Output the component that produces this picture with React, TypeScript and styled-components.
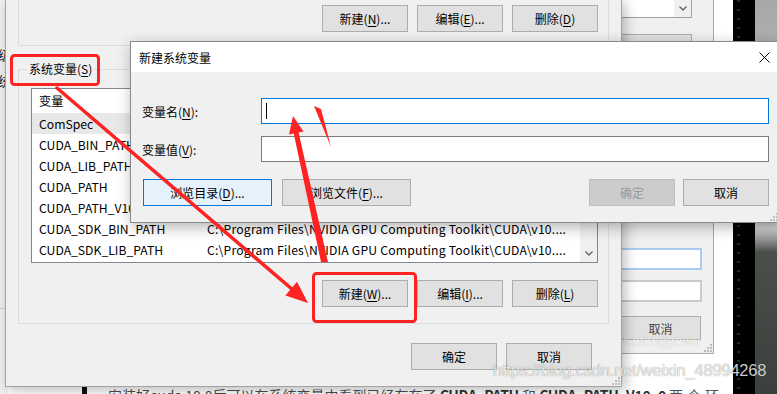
import React from 'react';
import styled, { createGlobalStyle } from 'styled-components';

const GlobalStyle = createGlobalStyle`
  html, body {
    margin: 0;
    padding: 0;
    background: #fff;
  }

  * {
    box-sizing: border-box;
  }
`;

const ui = `"Noto Sans CJK SC", "Liberation Sans", sans-serif`;

// ---------- desktop / page underneath ----------

const Desktop = styled.div`
  position: relative;
  width: 777px;
  height: 394px;
  overflow: hidden;
  background: #fff;
  font-family: ${ui};
  font-size: 12px;
  color: #000;
`;

const Page = styled.div`
  position: absolute;
  inset: 0;
  display: flex;
`;

const Article = styled.div`
  flex: 1;
  display: flex;
  align-items: flex-start;
  padding: 385px 0 0 82px;
`;

const Mark = styled.span`
  width: 5px;
  height: 12px;
  flex-shrink: 0;
  margin-top: 2px;
  margin-right: 21px;
  background: #111;
`;

const Paragraph = styled.p`
  margin: -3px 0 0;
  font-size: 14px;
  line-height: 26px;
  color: #4d4d4d;
  white-space: nowrap;

  b {
    color: #333;
    font-weight: 700;
    letter-spacing: -0.3px;
  }
`;

const Tail = styled.span`
  letter-spacing: 4px;
`;

const SideImage = styled.div`
  display: flex;
  width: 44px;
`;

const MatrixStrip = styled.div`
  width: 22px;
  background: #000;
  background-image: repeating-linear-gradient(
    180deg,
    rgba(40, 160, 60, 0.35) 0 2px,
    transparent 2px 9px
  );
  background-size: 3px 100%;
  background-repeat: repeat-y;
  background-position: 4px 0;
`;

const PhotoStrip = styled.div`
  width: 22px;
  background: linear-gradient(180deg, #a7a7a7 0%, #cfcfcf 58%, #4a4f4a 64%, #3b403c 100%);
`;

// ---------- windows behind ----------

const LeftBackWindow = styled.div`
  position: absolute;
  left: -80px;
  top: 0;
  width: 88px;
  height: 394px;
  background: #f0f0f0;
  display: flex;
  flex-direction: column;
  align-items: flex-end;
  padding: 46px 0 0 0;
  font-size: 13px;
  color: #222;
`;

const LeftBackLine = styled.span`
  line-height: 17px;
  margin-bottom: 9px;
  margin-right: -3px;
`;

const LeftBackDivider = styled.div`
  align-self: stretch;
  margin-top: 210px;
  border-top: 1px solid #d0d0d0;
`;

const RightBackWindow = styled.div`
  position: absolute;
  left: 590px;
  top: -40px;
  width: 124px;
  height: 394px;
  background: #f0f0f0;
  border: 1px solid #a9a9a9;
  padding: 0 11px 0 0;
  display: flex;
  flex-direction: column;
`;

const BackList = styled.div`
  height: 57px;
  margin-right: 10px;
  background: #fff;
  border: 1px solid #a0a0a0;
  display: flex;
  justify-content: flex-end;
`;

const BackScroll = styled.div`
  width: 17px;
  background: #f0f0f0;
  display: flex;
  align-items: flex-end;
  justify-content: center;
  padding-bottom: 6px;
`;

const BackButton = styled.div<{ $top: number; $inset?: number }>`
  height: 24px;
  margin-top: ${(p) => p.$top}px;
  margin-right: ${(p) => p.$inset ?? 0}px;
  background: #e1e1e1;
  border: 1px solid #adadad;
  display: flex;
  align-items: center;
  justify-content: center;
  color: #444;
  font-size: 12px;
`;

const BackInput = styled.div<{ $top: number; $focus?: boolean }>`
  height: 22px;
  margin-top: ${(p) => p.$top}px;
  background: #fff;
  border: 2px solid ${(p) => (p.$focus ? '#a8cdf0' : '#c9c9c9')};
`;

const BackCancel = styled(BackButton)`
  width: 81px;
  align-self: flex-end;
  margin-right: 1px;
`;

const FaintMark = styled.span`
  position: absolute;
  right: 13px;
  top: 372px;
  font-family: "Liberation Sans", sans-serif;
  font-style: italic;
  font-size: 14px;
  color: rgba(255, 255, 255, 0.8);
  text-shadow: 0 0 1px rgba(0, 0, 0, 0.25);
  white-space: nowrap;
`;

// ---------- shared win controls ----------

const Btn = styled.div<{ $w: number; $kind?: 'normal' | 'default' | 'disabled' }>`
  width: ${(p) => p.$w}px;
  height: 27px;
  flex-shrink: 0;
  display: flex;
  align-items: center;
  justify-content: center;
  font-size: 12px;
  line-height: 1;
  white-space: nowrap;
  background: ${(p) =>
    p.$kind === 'default' ? '#e5f1fb' : p.$kind === 'disabled' ? '#cccccc' : '#e1e1e1'};
  border: 1px solid
    ${(p) =>
      p.$kind === 'default' ? '#0078d7' : p.$kind === 'disabled' ? '#bfbfbf' : '#adadad'};
  color: ${(p) => (p.$kind === 'disabled' ? '#9a9a9a' : '#000')};

  u {
    text-underline-offset: 2px;
  }
`;

const GripWrap = styled.div`
  position: absolute;
  right: 1px;
  bottom: 1px;
  width: 8px;
  height: 8px;
  display: flex;
`;

const Grip: React.FC = () => (
  <GripWrap>
    <svg width="8" height="8" viewBox="0 0 8 8">
      {[
        [6, 0],
        [3, 3],
        [6, 3],
        [0, 6],
        [3, 6],
        [6, 6],
      ].map(([x, y]) => (
        <rect key={`${x}-${y}`} x={x} y={y} width="2" height="2" fill="#bcbcbc" />
      ))}
    </svg>
  </GripWrap>
);

const Chevron: React.FC<{ up?: boolean }> = ({ up }) => (
  <svg width="8" height="5" viewBox="0 0 8 5">
    <polyline
      points={up ? '0.5,4.5 4,1 7.5,4.5' : '0.5,0.5 4,4 7.5,0.5'}
      fill="none"
      stroke="#606060"
      strokeWidth="1.3"
    />
  </svg>
);

// ---------- environment variables dialog ----------

const EnvDialog = styled.div`
  position: absolute;
  left: 5px;
  top: 0;
  width: 617px;
  height: 387px;
  background: #f0f0f0;
  border: 1px solid #a3a3a3;
  border-top: none;
  box-shadow: 3px 3px 12px rgba(0, 0, 0, 0.28);
  padding: 0 12px;
  display: flex;
  flex-direction: column;
`;

const UserGroup = styled.div`
  height: 46px;
  border: 1px solid #dcdcdc;
  border-top: none;
  display: flex;
  justify-content: flex-end;
  align-items: flex-start;
  gap: 9px;
  padding: 5px 10px 0 0;
`;

const SystemGroup = styled.div`
  position: relative;
  margin-top: 23px;
  border: 1px solid #dcdcdc;
  padding: 18px 10px 16px 12px;
  display: flex;
  flex-direction: column;
`;

const Legend = styled.span`
  position: absolute;
  left: 8px;
  top: -9px;
  padding: 0 2px;
  background: #f0f0f0;
  font-size: 12px;
  line-height: 16px;

  u {
    text-underline-offset: 2px;
  }
`;

const VarList = styled.div`
  height: 175px;
  border: 1px solid #828790;
  background: #fff;
  display: grid;
  grid-template-columns: 1fr 17px;
  overflow: hidden;
`;

const ListBody = styled.div`
  display: flex;
  flex-direction: column;
  overflow: hidden;
`;

const ListRow = styled.div<{ $header?: boolean; $selected?: boolean }>`
  height: ${(p) => (p.$header ? 24 : 21)}px;
  flex-shrink: 0;
  display: grid;
  grid-template-columns: 168px 1fr;
  align-items: center;
  background: ${(p) => (p.$selected ? '#e8e8e8' : '#fff')};
  font-size: 12.2px;
  white-space: nowrap;
`;

const Cell = styled.span<{ $value?: boolean }>`
  padding-left: 7px;
  overflow: hidden;
  letter-spacing: ${(p) => (p.$value ? '0.2px' : '0')};
`;

const ScrollBar = styled.div`
  background: #f0f0f0;
  display: flex;
  flex-direction: column;
  justify-content: space-between;
  align-items: center;
  padding: 6px 0;
`;

const ButtonRow = styled.div<{ $top: number; $right?: number }>`
  display: flex;
  justify-content: flex-end;
  gap: 9px;
  margin-top: ${(p) => p.$top}px;
  margin-right: ${(p) => p.$right ?? 0}px;
`;

// ---------- new system variable dialog ----------

const NewDialog = styled.div`
  position: absolute;
  left: 130px;
  top: 41px;
  width: 650px;
  height: 182px;
  border: 1px solid #8a8a8a;
  background: #f0f0f0;
  box-shadow: 2px 4px 14px rgba(0, 0, 0, 0.3);
  display: flex;
  flex-direction: column;
`;

const TitleBar = styled.div`
  height: 30px;
  flex-shrink: 0;
  background: #fff;
  display: flex;
  align-items: center;
  justify-content: space-between;
  padding: 0 8px 0 8px;
  font-size: 12px;
`;

const CloseGlyph = styled.span`
  display: flex;
  margin-right: 1px;
`;

const DialogBody = styled.div`
  padding: 26px 10px 0 11px;
  display: flex;
  flex-direction: column;
`;

const Field = styled.div<{ $top?: number }>`
  display: grid;
  grid-template-columns: 119px 1fr;
  align-items: center;
  margin-top: ${(p) => p.$top ?? 0}px;
  font-size: 12px;

  u {
    text-underline-offset: 2px;
  }
`;

const TextBox = styled.div<{ $focus?: boolean }>`
  height: 26px;
  background: #fff;
  border: 1px solid ${(p) => (p.$focus ? '#0078d7' : '#7a7a7a')};
  display: flex;
  align-items: center;
  padding-left: 4px;
`;

const Caret = styled.span`
  width: 1px;
  height: 16px;
  background: #000;
`;

const ActionRow = styled.div`
  display: flex;
  justify-content: space-between;
  margin-top: 17px;
  padding-left: 1px;
`;

const ActionGroup = styled.div<{ $gap: number }>`
  display: flex;
  gap: ${(p) => p.$gap}px;
`;

// ---------- overlays ----------

const Watermark = styled.span`
  position: absolute;
  left: 493px;
  top: 361px;
  font-family: "Liberation Sans", sans-serif;
  font-size: 16.5px;
  letter-spacing: -0.2px;
  color: rgba(255, 255, 255, 0.8);
  text-shadow: 0 0 1px rgba(0, 0, 0, 0.5);
  white-space: nowrap;
`;

const Annotations = styled.svg`
  position: absolute;
  left: 0;
  top: 0;
  pointer-events: none;
`;

const rows = [
  ['ComSpec', 'C:\\Windows\\system32\\cmd.exe'],
  ['CUDA_BIN_PATH', '%CUDA_PATH%\\bin'],
  ['CUDA_LIB_PATH', '%CUDA_PATH%\\lib\\x64'],
  ['CUDA_PATH', 'C:\\Program Files\\NVIDIA GPU Computing Toolkit\\CUDA\\v10.0'],
  ['CUDA_PATH_V10_0', 'C:\\Program Files\\NVIDIA GPU Computing Toolkit\\CUDA\\v10.0'],
  ['CUDA_SDK_BIN_PATH', 'C:\\Program Files\\NVIDIA GPU Computing Toolkit\\CUDA\\v10....'],
  ['CUDA_SDK_LIB_PATH', 'C:\\Program Files\\NVIDIA GPU Computing Toolkit\\CUDA\\v10....'],
];

const red = '#ff2222';

const App: React.FC = () => {
  return (
    <>
      <GlobalStyle />
      <Desktop>
        <Page>
          <Article>
            <Mark />
            <Paragraph>
              安装好cuda 10.0后可以在系统变量中看到已经存在了 <b>CUDA_PATH</b> 和{' '}
              <b>CUDA_PATH_V10_0</b> <Tail>两个环</Tail>
              <br />
              境变量
            </Paragraph>
          </Article>
          <SideImage>
            <MatrixStrip />
            <PhotoStrip />
          </SideImage>
        </Page>

        <LeftBackWindow>
          <LeftBackLine>高级</LeftBackLine>
          <LeftBackLine>系统</LeftBackLine>
          <LeftBackDivider />
        </LeftBackWindow>

        <RightBackWindow>
          <BackList>
            <BackScroll>
              <Chevron />
            </BackScroll>
          </BackList>
          <BackButton $top={16} $inset={10} />
          <BackInput $top={190} $focus />
          <BackInput $top={10} />
          <BackCancel $top={14}>取消</BackCancel>
          <FaintMark>https://blog.csdn.net/Kefenggewu</FaintMark>
          <Grip />
        </RightBackWindow>

        <EnvDialog>
          <UserGroup>
            <Btn $w={86}>
              新建(<u>N</u>)...
            </Btn>
            <Btn $w={86}>
              编辑(<u>E</u>)...
            </Btn>
            <Btn $w={86}>
              删除(<u>D</u>)
            </Btn>
          </UserGroup>

          <SystemGroup>
            <Legend>
              系统变量(<u>S</u>)
            </Legend>
            <VarList>
              <ListBody>
                <ListRow $header>
                  <Cell>变量</Cell>
                  <Cell>值</Cell>
                </ListRow>
                {rows.map(([name, value], i) => (
                  <ListRow key={name} $selected={i === 0}>
                    <Cell>{name}</Cell>
                    <Cell $value>{value}</Cell>
                  </ListRow>
                ))}
              </ListBody>
              <ScrollBar>
                <Chevron up />
                <Chevron />
              </ScrollBar>
            </VarList>
            <ButtonRow $top={17}>
              <Btn $w={86}>
                新建(<u>W</u>)...
              </Btn>
              <Btn $w={86}>
                编辑(<u>I</u>)...
              </Btn>
              <Btn $w={86}>
                删除(<u>L</u>)
              </Btn>
            </ButtonRow>
          </SystemGroup>

          <ButtonRow $top={19} $right={17}>
            <Btn $w={86}>确定</Btn>
            <Btn $w={86}>取消</Btn>
          </ButtonRow>
          <Grip />
        </EnvDialog>

        <NewDialog>
          <TitleBar>
            <span>新建系统变量</span>
            <CloseGlyph>
              <svg width="11" height="11" viewBox="0 0 11 11">
                <path d="M0.5 0.5 L10.5 10.5 M10.5 0.5 L0.5 10.5" stroke="#000" strokeWidth="1" />
              </svg>
            </CloseGlyph>
          </TitleBar>
          <DialogBody>
            <Field>
              <span>
                变量名(<u>N</u>):
              </span>
              <TextBox $focus>
                <Caret />
              </TextBox>
            </Field>
            <Field $top={12}>
              <span>
                变量值(<u>V</u>):
              </span>
              <TextBox />
            </Field>
            <ActionRow>
              <ActionGroup $gap={10}>
                <Btn $w={129} $kind="default">
                  浏览目录(<u>D</u>)...
                </Btn>
                <Btn $w={129}>
                  浏览文件(<u>F</u>)...
                </Btn>
              </ActionGroup>
              <ActionGroup $gap={8}>
                <Btn $w={86} $kind="disabled">
                  确定
                </Btn>
                <Btn $w={86}>取消</Btn>
              </ActionGroup>
            </ActionRow>
          </DialogBody>
          <Grip />
        </NewDialog>

        <Watermark>https://blog.csdn.net/weixin_48994268</Watermark>

        <Annotations width="777" height="394" viewBox="0 0 777 394">
          <rect x="11.5" y="55.5" width="87" height="29" rx="3" fill="none" stroke={red} strokeWidth="3" />
          <rect x="313.5" y="273.5" width="102" height="48" rx="3" fill="none" stroke={red} strokeWidth="3" />
          {/* arrow from the group label down to the new button */}
          <line x1="57" y1="88" x2="293" y2="290" stroke={red} strokeWidth="3.5" strokeLinecap="round" />
          <polygon points="308,303 285.4,295.6 297,281.8" fill={red} />
          {/* arrow from the new button up to the name field */}
          <polygon points="321,262 328,262 298,130 293,130" fill={red} />
          <polygon points="293,116 303.5,131.5 289,134.5" fill={red} />
          <polygon points="314,106 321,109 331,147" fill={red} />
        </Annotations>
      </Desktop>
    </>
  );
};

export default App;
